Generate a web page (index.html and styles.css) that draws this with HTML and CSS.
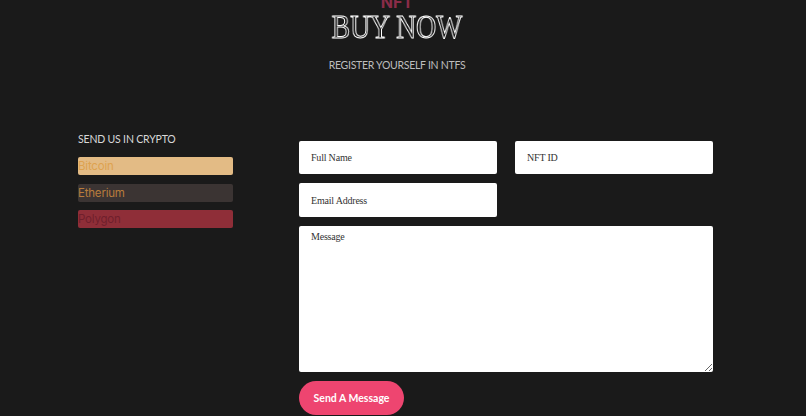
FILE: index.html
```html
<!DOCTYPE html>
<html lang="en">
<head>
  <meta charset="UTF-8">
  <meta name="viewport" content="width=device-width, initial-scale=1.0">
  <title>Buy Now - NFT</title>
  <link rel="stylesheet" href="styles.css">
</head>
<body>
  <header class="section-title">
    <p class="eyebrow">NFT</p>
    <h1>BUY NOW</h1>
    <p class="subtitle">REGISTER YOURSELF IN NTFS</p>
  </header>

  <main class="contact-container">
    <aside class="crypto-container">
      <h2>SEND US IN CRYPTO</h2>
      <div class="crypto-bar bitcoin">Bitcoin</div>
      <div class="crypto-bar etherium">Etherium</div>
      <div class="crypto-bar polygon">Polygon</div>
    </aside>

    <form class="contact-form">
      <input class="field" type="text" placeholder="Full Name">
      <input class="field" type="text" placeholder="NFT ID">
      <input class="field field-tall" type="text" placeholder="Email Address">
      <textarea class="field message" placeholder="Message"></textarea>
      <button class="send-button" type="button">Send A Message</button>
    </form>
  </main>
</body>
</html>
```

FILE: styles.css
```css
body {
  margin: 0;
  height: 416px;
  overflow: hidden;
  background-color: #1a1a1a;
  font-family: 'Inter', sans-serif;
}

.section-title {
  display: flow-root;
  height: 141px;
  text-align: center;
  box-sizing: border-box;
}

.eyebrow {
  margin: -6px 0 0 -12px;
  height: 16px;
  line-height: 16px;
  font-size: 16px;
  font-weight: 700;
  color: #8a2c48;
}

.section-title h1 {
  margin: 0 0 0 -12px;
  height: 34px;
  line-height: 34px;
  font-family: 'Liberation Serif', serif;
  font-size: 33px;
  font-weight: 400;
  color: #1a1a1a;
  -webkit-text-stroke: 1px #fff;
  transform: scaleX(0.84);
  will-change: transform;
}

.subtitle {
  margin: 13px 0 0 -12px;
  font-family: 'Lato', sans-serif;
  font-size: 10.5px;
  letter-spacing: -0.28px;
  line-height: 16px;
  color: #bdbdbd;
}

.contact-container {
  display: flex;
  padding-left: 78px;
}

.crypto-container {
  width: 155px;
  margin-right: 66px;
  margin-top: -10px;
}

.crypto-container h2 {
  margin: 0 0 10px;
  font-family: 'Lato', sans-serif;
  font-size: 10.5px;
  letter-spacing: -0.18px;
  font-weight: 400;
  line-height: 16px;
  color: #d8d8d8;
}

.crypto-bar {
  height: 18px;
  line-height: 19px;
  margin-bottom: 8.6px;
  border-radius: 2px;
  font-size: 11.5px;
  letter-spacing: -0.2px;
}

.bitcoin {
  background-color: #e3bb85;
  color: #dea24f;
}

.etherium {
  background-color: #3b3433;
  color: #b87c3c;
}

.polygon {
  background-color: #8f2e38;
  color: #6f1f2c;
}

.contact-form {
  display: grid;
  grid-template-columns: 198px 198px;
  column-gap: 18px;
  row-gap: 9px;
  align-content: start;
}

.field {
  box-sizing: border-box;
  height: 33px;
  padding: 0 12px;
  border: none;
  border-radius: 2px;
  background-color: #fff;
  font-family: 'Liberation Serif', serif;
  font-size: 10px;
  letter-spacing: -0.2px;
}

.field::placeholder {
  color: #333;
  opacity: 1;
}

.field-tall {
  height: 34px;
  grid-column: 1;
}

.message {
  grid-column: 1 / 3;
  height: 146px;
  padding-top: 5px;
}

.send-button {
  grid-column: 1;
  width: 105px;
  height: 34px;
  padding-bottom: 2px;
  border: none;
  border-radius: 17px;
  background-color: #ee4570;
  color: #fff;
  font-family: 'Lato', sans-serif;
  font-size: 10.5px;
  font-weight: 700;
}
```
